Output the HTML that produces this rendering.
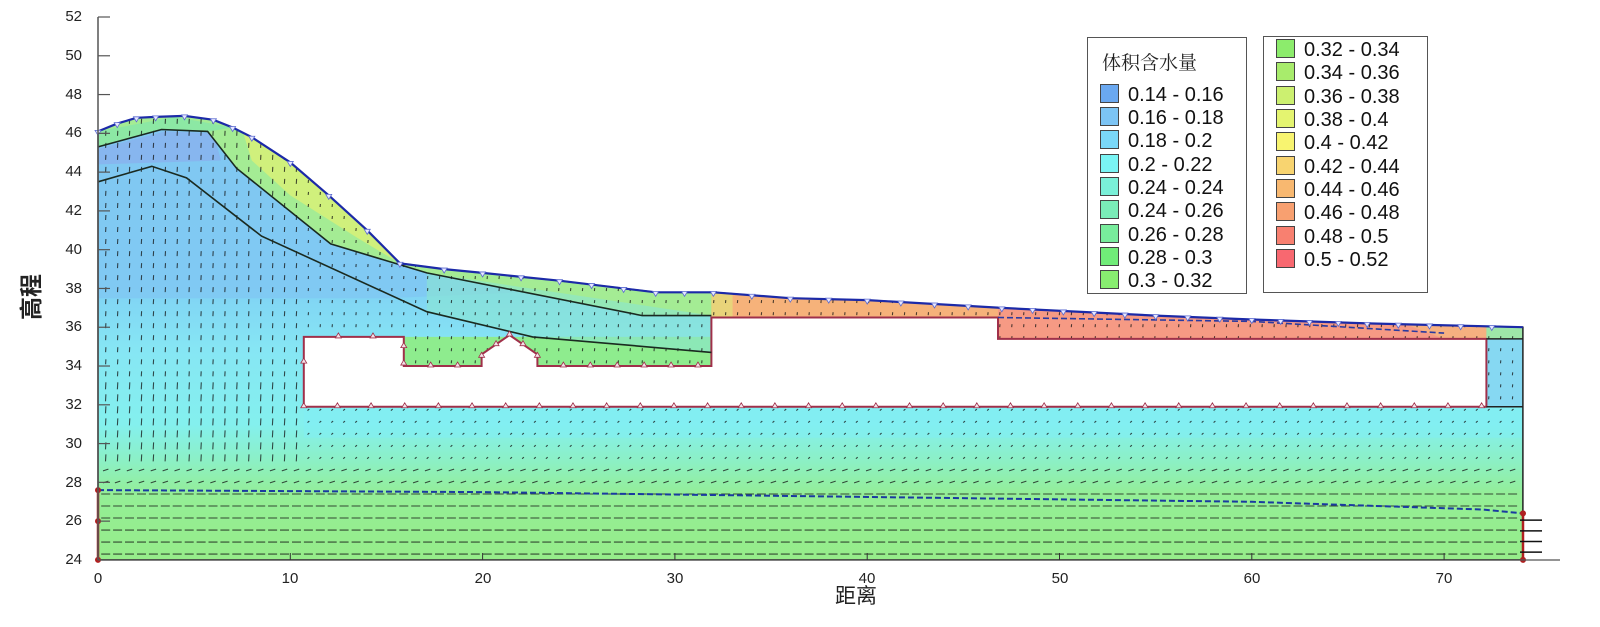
<!DOCTYPE html>
<html><head><meta charset="utf-8"><style>
html,body{margin:0;padding:0;background:#fff;}
body{width:1600px;height:627px;overflow:hidden;position:relative;font-family:"Liberation Sans","Noto Sans CJK SC",sans-serif;}
svg{position:absolute;left:0;top:0;}
.lg{position:absolute;border:1.5px solid #555;background:#fff;box-sizing:border-box;}
.row{position:absolute;left:12px;height:22px;font-size:20px;color:#111;line-height:22px;white-space:nowrap;}
.row i{display:inline-block;width:17px;height:17px;border:1.3px solid #444;vertical-align:-2px;margin-right:9px;}
.ttl{position:absolute;left:14px;top:10px;font-size:19px;color:#222;font-family:"Noto Serif CJK SC","Noto Sans CJK SC",serif;}
.yl{position:absolute;font-size:15px;color:#222;width:30px;text-align:right;left:52px;}
.xl{position:absolute;font-size:15px;color:#222;width:40px;text-align:center;top:570px;}
</style></head><body>
<svg id="s" width="1600" height="627" viewBox="0 0 1600 627"></svg>

<div class="yl" style="top:8px">52</div><div class="yl" style="top:47px">50</div><div class="yl" style="top:86px">48</div><div class="yl" style="top:124px">46</div><div class="yl" style="top:163px">44</div><div class="yl" style="top:202px">42</div><div class="yl" style="top:241px">40</div><div class="yl" style="top:280px">38</div><div class="yl" style="top:318px">36</div><div class="yl" style="top:357px">34</div><div class="yl" style="top:396px">32</div><div class="yl" style="top:435px">30</div><div class="yl" style="top:474px">28</div><div class="yl" style="top:512px">26</div><div class="yl" style="top:551px">24</div>
<div class="xl" style="left:78px">0</div><div class="xl" style="left:270px">10</div><div class="xl" style="left:463px">20</div><div class="xl" style="left:655px">30</div><div class="xl" style="left:847px">40</div><div class="xl" style="left:1040px">50</div><div class="xl" style="left:1232px">60</div><div class="xl" style="left:1424px">70</div>
<div style="position:absolute;left:835px;top:580px;font-size:21px;color:#222;">距离</div>
<div style="position:absolute;left:6px;top:280px;font-size:23px;color:#222;transform:rotate(-90deg);font-weight:bold;">高程</div>

<div class="lg" style="left:1087px;top:37px;width:160px;height:257px;">
<div class="ttl">体积含水量</div>
<div class="row" style="top:46px"><i style="background:#6aa8f0"></i>0.14 - 0.16</div>
<div class="row" style="top:69px"><i style="background:#7cc4f4"></i>0.16 - 0.18</div>
<div class="row" style="top:92px"><i style="background:#7ad8f8"></i>0.18 - 0.2</div>
<div class="row" style="top:116px"><i style="background:#7af4f4"></i>0.2 - 0.22</div>
<div class="row" style="top:139px"><i style="background:#7af0d8"></i>0.24 - 0.24</div>
<div class="row" style="top:162px"><i style="background:#7aecb8"></i>0.24 - 0.26</div>
<div class="row" style="top:186px"><i style="background:#78ec9c"></i>0.26 - 0.28</div>
<div class="row" style="top:209px"><i style="background:#70ec78"></i>0.28 - 0.3</div>
<div class="row" style="top:232px"><i style="background:#88ee70"></i>0.3 - 0.32</div>
</div>
<div class="lg" style="left:1263px;top:36px;width:165px;height:257px;">
<div class="row" style="top:2px"><i style="background:#8cec6c"></i>0.32 - 0.34</div>
<div class="row" style="top:25px"><i style="background:#a8ec6c"></i>0.34 - 0.36</div>
<div class="row" style="top:49px"><i style="background:#ccf070"></i>0.36 - 0.38</div>
<div class="row" style="top:72px"><i style="background:#e4f470"></i>0.38 - 0.4</div>
<div class="row" style="top:95px"><i style="background:#f8f470"></i>0.4 - 0.42</div>
<div class="row" style="top:119px"><i style="background:#f8d470"></i>0.42 - 0.44</div>
<div class="row" style="top:142px"><i style="background:#f8b870"></i>0.44 - 0.46</div>
<div class="row" style="top:165px"><i style="background:#f8a070"></i>0.46 - 0.48</div>
<div class="row" style="top:189px"><i style="background:#f88070"></i>0.48 - 0.5</div>
<div class="row" style="top:212px"><i style="background:#f86870"></i>0.5 - 0.52</div>
</div>

<script>
(function(){
var X=function(u){return 98+19.23*u}, Y=function(v){return 17+(52-v)*19.39};
function P(a){return a.map(function(p){return X(p[0]).toFixed(1)+','+Y(p[1]).toFixed(1)}).join(' ')}
var S=46.8;
var top=[[0,46.1],[1,46.5],[2,46.8],[3,46.85],[4.5,46.9],[6,46.7],[7,46.3],[8,45.8],[10,44.5],[12,42.8],[14,41],[15.7,39.3],[18,39],[20,38.8],[24,38.4],[29,37.8],[32,37.8],[36,37.5],[40,37.4],[47,37],[55,36.6],[60,36.4],[66,36.2],[74.1,36.0]];
var dom=top.concat([[74.1,24],[0,24]]);
var hole=[[10.7,35.5],[15.9,35.5],[15.9,34],[19.95,34],[19.95,34.6],[21.4,35.6],[22.85,34.6],[22.85,34],[31.9,34],[31.9,36.5],[S,36.5],[S,35.4],[72.2,35.4],[72.2,31.9],[10.7,31.9]];
var l1=[[0,45.3],[3.3,46.2],[5.7,46.1],[7.2,44.2],[12.1,40.3],[17.1,38.8],[28.3,36.6],[31.9,36.6]];
var l2=[[0,43.5],[2.8,44.3],[4.6,43.7],[8.5,40.7],[17.1,36.8],[22.6,35.5],[31.9,34.7]];
var h='';
h+='<defs><linearGradient id="g" gradientUnits="userSpaceOnUse" x1="0" y1="100" x2="0" y2="570">'+
'<stop offset="0.03" stop-color="#82c4f0"/><stop offset="0.40" stop-color="#80d2f4"/><stop offset="0.53" stop-color="#86e6f4"/><stop offset="0.69" stop-color="#84f0ee"/><stop offset="0.77" stop-color="#8cf0c4"/><stop offset="0.84" stop-color="#94ee96"/><stop offset="1" stop-color="#96ec88"/></linearGradient>'+
'<clipPath id="c"><polygon points="'+P(dom)+'"/></clipPath></defs>';
h+='<g clip-path="url(#c)"><rect x="98" y="100" width="1430" height="470" fill="url(#g)"/>';
h+='<polygon points="'+P([[0,45.2],[3.5,46.1],[6,46],[7.5,44],[12,40.5],[17,38.8],[22,37.8],[15,37.5],[8,37.5],[0,37.5]])+'" fill="#80c8f2" opacity="0.85"/>';
h+='<polygon points="'+P([[0,45.2],[3.5,46.1],[6,46],[6.4,44.6],[0,44.4]])+'" fill="#88b2ee" opacity="0.8"/>';
h+='<polygon points="'+P([[10.7,31.9],[74.1,31.9],[74.1,30.3],[10.7,30.3]])+'" fill="#80eef6" opacity="0.5"/>';
h+='<polygon points="'+P(top.slice(0,17).concat(l1.slice().reverse()))+'" fill="#a4ec94"/>';
h+='<polygon points="'+P([[7.5,46.2],[10,44.5],[12,42.8],[14,41],[15.7,39.3],[13.5,40.6],[10,42.8],[8,44.6]])+'" fill="#d0f07c"/>';
h+='<polygon points="'+P([[0,46.1],[4,46.85],[7,46.3],[5.8,46.1],[3.3,46.2],[0,45.3]])+'" fill="#8ce8a4"/>';
h+='<polygon points="'+P([[15.9,35.5],[31.9,35.5],[31.9,34],[22.85,34],[22.85,34.6],[21.4,35.6],[19.95,34.6],[19.95,34],[15.9,34]])+'" fill="#8eec8e"/>';
h+='<polygon points="'+P(l2.slice(4).concat([[31.9,36.6],[17.1,38.8]]))+'" fill="#8ae6d0" opacity="0.6"/>';
h+='<polygon points="'+P([[31.9,37.8],[36,37.5],[40,37.4],[S,37.0],[S,36.5],[31.9,36.5]])+'" fill="#f6b27a"/>';
h+='<polygon points="'+P([[31.9,37.8],[33,37.7],[33,36.5],[31.9,36.5]])+'" fill="#e8d47a"/>';
h+='<polygon points="'+P([[S,37.0],[55,36.6],[60,36.4],[66,36.2],[72.2,36.05],[72.2,35.4],[S,35.4]])+'" fill="#f69a84"/>';
h+='<polygon points="'+P([[68,36.15],[72.2,36.05],[72.2,35.4],[70,35.4]])+'" fill="#f6b080"/>';
h+='<polygon points="'+P([[72.2,36.05],[74.1,36],[74.1,35.4],[72.2,35.4]])+'" fill="#9ee6a8"/>';
h+='<polygon points="'+P([[72.2,35.4],[74.1,35.4],[74.1,31.9],[72.2,31.9]])+'" fill="#86d8f2"/>';
var a='';
for(var u=0.4;u<74;u+=0.62){for(var v=24.3;v<47;v+=0.62){
 var dx,dy,len;
 if(v<27.6){dx=1;dy=0;len=9;}
 else if(v<29){dx=0.9;dy=-0.3;len=6;}
 else if(u<10.5){dx=0.05;dy=-1;len=v>33?5:7;}
 else if(v<31.9){dx=0.6;dy=-0.5;len=3;}
 else {dx=0.1;dy=-1;len=3;}
 var x=X(u),y=Y(v);
 a+='M'+(x-dx*len/2).toFixed(1)+' '+(y-dy*len/2).toFixed(1)+'l'+(dx*len).toFixed(1)+' '+(dy*len).toFixed(1);
}}
h+='<path d="'+a+'" stroke="#111" stroke-width="1.1" fill="none" opacity="0.75"/>';
h+='</g>';
h+='<polygon points="'+P(hole)+'" fill="#fff" stroke="#a0304a" stroke-width="2"/>';
h+='<polyline points="'+P(l1)+'" fill="none" stroke="#1a2a20" stroke-width="1.6"/>';
h+='<polyline points="'+P(l2)+'" fill="none" stroke="#1a2a20" stroke-width="1.6"/>';
h+='<polyline points="'+P([[72.2,35.4],[74.1,35.4]])+'" stroke="#222" stroke-width="1.5"/>';
h+='<polyline points="'+P([[72.2,31.9],[74.1,31.9]])+'" stroke="#222" stroke-width="1.5"/>';
h+='<polyline points="'+P([[0,27.6],[20,27.5],[60,27.0],[72,26.6],[74.1,26.4]])+'" fill="none" stroke="#1a3aa0" stroke-width="2" stroke-dasharray="6,3"/>';
h+='<polyline points="'+P([[S,36.5],[60,36.3],[70,35.7]])+'" fill="none" stroke="#2a3aa0" stroke-width="1.6" stroke-dasharray="6,3"/>';
h+='<polygon points="'+P(dom)+'" fill="none" stroke="#222" stroke-width="1.5"/>';
h+='<polyline points="'+P(top)+'" fill="none" stroke="#1c2aa8" stroke-width="2.2"/>';
var m='';
for(var i=0;i<top.length-1;i++){var p=top[i],q=top[i+1];var n=Math.max(1,Math.round((q[0]-p[0])/1.7));for(var k=0;k<n;k++){var t=k/n;var x=X(p[0]+(q[0]-p[0])*t),y=Y(p[1]+(q[1]-p[1])*t);m+='M'+(x-3)+' '+(y-1)+'h6l-3 5z';}}
h+='<path d="'+m+'" fill="#e8e8ff" stroke="#5a6ad0" stroke-width="0.8"/>';
var m2='';
function tri(u,v){var x=X(u),y=Y(v);m2+='M'+(x-3)+' '+(y+1)+'h6l-3 -5z';}
for(var u=10.7;u<72.3;u+=1.75){tri(u,31.9);}
[12.5,14.3].forEach(function(u){tri(u,35.5);});
tri(10.7,34.2);tri(15.9,35);tri(15.9,34.1);
[17.3,18.7,24.2,25.6,27,28.4,29.8,31.2].forEach(function(u){tri(u,34);});
tri(19.95,34.5);tri(20.7,35.1);tri(21.4,35.6);tri(22.1,35.1);tri(22.85,34.5);
h+='<path d="'+m2+'" fill="#f4e0e8" stroke="#a0304a" stroke-width="0.8"/>';
h+='<line x1="98" y1="'+Y(27.6)+'" x2="98" y2="560" stroke="#b02020" stroke-width="2.5"/>';
h+='<line x1="1523" y1="'+Y(26.4)+'" x2="1523" y2="560" stroke="#b02020" stroke-width="2.5"/>';
[24,26,27.6].forEach(function(v){h+='<circle cx="98" cy="'+Y(v)+'" r="3" fill="#b02020"/>';});
[24,26.4].forEach(function(v){h+='<circle cx="1523" cy="'+Y(v)+'" r="3" fill="#b02020"/>';});
var ar='';
for(var v=24.4;v<26.5;v+=0.55){var y=Y(v);ar+='M1520 '+y+'h22';}
h+='<path d="'+ar+'" stroke="#111" stroke-width="1.5"/>';
h+='<line x1="98" y1="17" x2="98" y2="560" stroke="#555" stroke-width="1.5"/>';
h+='<line x1="98" y1="560" x2="1560" y2="560" stroke="#555" stroke-width="1.3"/>';
for(var v=24;v<=52;v+=2){h+='<line x1="98" x2="110" y1="'+Y(v)+'" y2="'+Y(v)+'" stroke="#555" stroke-width="1.2"/>';}
for(var u=10;u<=70;u+=10){h+='<line x1="'+X(u)+'" x2="'+X(u)+'" y1="553" y2="560" stroke="#333" stroke-width="1"/>';}
document.getElementById('s').innerHTML=h;
})();
</script>
</body></html>
